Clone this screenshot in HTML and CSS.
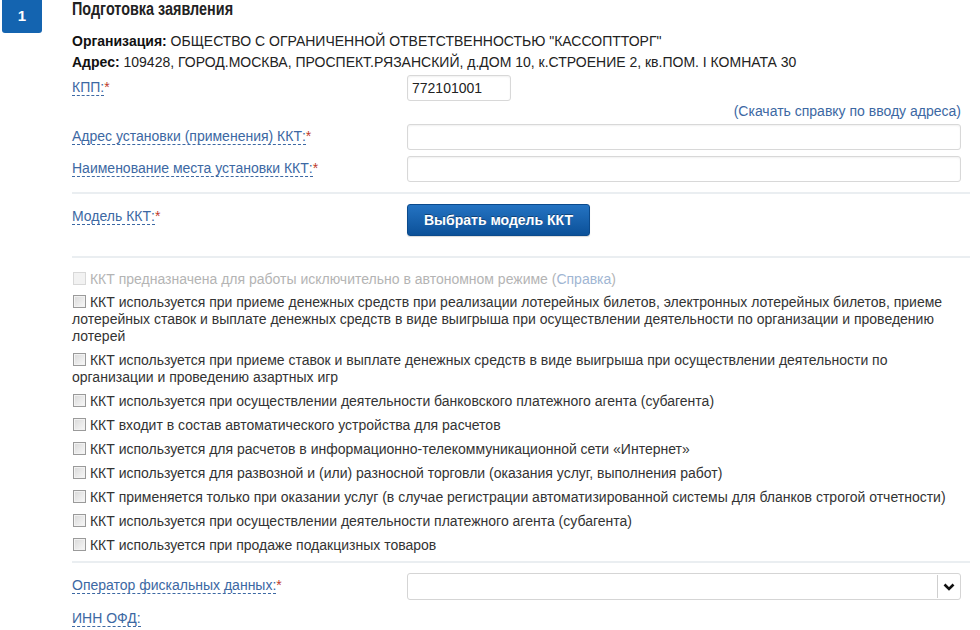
FILE: index.html
```html
<!DOCTYPE html>
<html lang="ru">
<head>
<meta charset="utf-8">
<title>Подготовка заявления</title>
<link rel="stylesheet" href="styles.css">
</head>
<body>
<div class="step">
  <div class="badge">1</div>
  <div class="content">
    <h2 class="title"><span class="title-text">Подготовка заявления</span></h2>
    <div class="info">
      <div><b>Организация:</b> ОБЩЕСТВО С ОГРАНИЧЕННОЙ ОТВЕТСТВЕННОСТЬЮ "КАССОПТТОРГ"</div>
      <div><b>Адрес:</b> 109428, ГОРОД.МОСКВА, ПРОСПЕКТ.РЯЗАНСКИЙ, д.ДОМ 10, к.СТРОЕНИЕ 2, кв.ПОМ. I КОМНАТА 30</div>
    </div>

    <div class="row row-kpp">
      <div class="label"><span class="lbl">КПП:</span><span class="req">*</span></div>
      <div class="field"><div class="input input-short">772101001</div></div>
    </div>
    <div class="help-link"><a>(Скачать справку по вводу адреса)</a></div>
    <div class="row">
      <div class="label"><span class="lbl">Адрес установки (применения) ККТ:</span><span class="req">*</span></div>
      <div class="field"><div class="input"></div></div>
    </div>
    <div class="row">
      <div class="label"><span class="lbl">Наименование места установки ККТ:</span><span class="req">*</span></div>
      <div class="field"><div class="input"></div></div>
    </div>

    <hr class="sep">

    <div class="row row-model">
      <div class="label"><span class="lbl">Модель ККТ:</span><span class="req">*</span></div>
      <div class="field"><button class="btn">Выбрать модель ККТ</button></div>
    </div>

    <hr class="sep sep-model">

    <div class="checks">
      <p class="check disabled"><span class="box"></span> ККТ предназначена для работы исключительно в автономном режиме (<a>Справка</a>)</p>
      <p class="check"><span class="box"></span> ККТ используется при приеме денежных средств при реализации лотерейных билетов, электронных лотерейных билетов, приеме лотерейных ставок и выплате денежных средств в виде выигрыша при осуществлении деятельности по организации и проведению лотерей</p>
      <p class="check"><span class="box"></span> ККТ используется при приеме ставок и выплате денежных средств в виде выигрыша при осуществлении деятельности по организации и проведению азартных игр</p>
      <p class="check"><span class="box"></span> ККТ используется при осуществлении деятельности банковского платежного агента (субагента)</p>
      <p class="check"><span class="box"></span> ККТ входит в состав автоматического устройства для расчетов</p>
      <p class="check"><span class="box"></span> ККТ используется для расчетов в информационно-телекоммуникационной сети «Интернет»</p>
      <p class="check"><span class="box"></span> ККТ используется для развозной и (или) разносной торговли (оказания услуг, выполнения работ)</p>
      <p class="check"><span class="box"></span> ККТ применяется только при оказании услуг (в случае регистрации автоматизированной системы для бланков строгой отчетности)</p>
      <p class="check"><span class="box"></span> ККТ используется при осуществлении деятельности платежного агента (субагента)</p>
      <p class="check"><span class="box"></span> ККТ используется при продаже подакцизных товаров</p>
    </div>

    <hr class="sep sep-ofd">

    <div class="row">
      <div class="label"><span class="lbl">Оператор фискальных данных:</span><span class="req">*</span></div>
      <div class="field">
        <div class="select">
          <span class="select-arrow"><svg width="12" height="8" viewBox="0 0 12 8"><polyline points="1.5,1.5 6,6 10.5,1.5" fill="none" stroke="#111" stroke-width="2.6"/></svg></span>
        </div>
      </div>
    </div>
    <div class="row">
      <div class="label"><span class="lbl">ИНН ОФД:</span></div>
    </div>
  </div>
</div>
</body>
</html>
```

FILE: styles.css
```css
html, body {
  margin: 0;
  padding: 0;
  background: #fff;
}
body {
  font-family: "Liberation Sans", Arial, sans-serif;
  font-size: 14px;
  color: #333;
  overflow: hidden;
}
.step {
  display: flex;
  align-items: flex-start;
}
.badge {
  margin-left: 2px;
  width: 40px;
  height: 33px;
  background: #1464b0;
  color: #fff;
  font-weight: bold;
  font-size: 15px;
  line-height: 31px;
  text-align: center;
  border-radius: 0 0 3px 3px;
}
.content {
  margin-left: 30px;
  width: 898px;
}
.title {
  margin: 0;
  font-family: "Liberation Sans", Arial, sans-serif;
  font-size: 18px;
  line-height: 16px;
  font-weight: bold;
  color: #222;
  white-space: nowrap;
}
.title-text {
  display: inline-block;
  padding-top: 1px;
  transform: scaleX(0.8);
  transform-origin: 0 0;
}
.info {
  margin-top: 14px;
  font-size: 14px;
  line-height: 21px;
  color: #222;
}
.info b {
  color: #111;
}
.row {
  display: flex;
  align-items: flex-start;
  margin-bottom: 6px;
}
.row-kpp {
  margin-top: 2px;
  margin-bottom: 0;
}
.label {
  width: 335px;
  flex: none;
  padding-top: 4px;
  line-height: 17px;
}
.lbl {
  color: #3c68a3;
  border-bottom: 1px dashed #3c68a3;
}
.req {
  color: #c0392b;
}
.field {
  flex: 1;
  margin-right: 9px;
}
.input {
  height: 24px;
  border: 1px solid #d8d8d8;
  border-radius: 3px;
  box-shadow: inset 0 1px 2px rgba(0,0,0,0.06);
  background: #fff;
  font-size: 14px;
  line-height: 24px;
  padding: 0 4px;
  color: #222;
}
.input-short {
  width: 94px;
}
.help-link {
  text-align: right;
  margin-right: 9px;
  font-size: 14px;
  line-height: 17px;
  margin-top: 2px;
  margin-bottom: 4px;
}
a {
  color: #3c68a3;
}
.sep {
  border: 0;
  height: 2px;
  background: #eaeef1;
  margin: 10px 0 10px 0;
}
.row-model {
  margin-bottom: 0;
}
.btn {
  width: 183px;
  height: 32px;
  border: 1px solid #0b4a8c;
  border-radius: 3px;
  background: linear-gradient(#2473c2, #0c5199);
  color: #fff;
  font-family: "Liberation Sans", Arial, sans-serif;
  font-weight: bold;
  font-size: 14px;
  text-shadow: 0 -1px 0 rgba(0,0,0,0.35);
  box-shadow: 0 1px 1px rgba(0,0,0,0.15);
  padding: 0;
}
.sep-model {
  margin: 20px 0 13px 0;
}
.checks {
  line-height: 17px;
}
.check {
  margin: 0 0 7px 0;
}
.check.disabled {
  margin-bottom: 6px;
}
.box {
  display: inline-block;
  width: 11px;
  height: 11px;
  border: 1px solid #9a9a9a;
  background: linear-gradient(135deg, #d9d9d9, #f8f8f8);
  box-shadow: inset 0 0 0 1px #f2f2f2;
  vertical-align: -1px;
  margin-left: 1px;
}
.check.disabled {
  color: #b4b4b4;
}
.check.disabled .box {
  border-color: #d8d8d8;
  background: #f2f2f2;
}
.check.disabled a {
  color: #9fb6d3;
}
.sep-ofd {
  margin: 4px 0 10px 0;
}
.select {
  position: relative;
  height: 25px;
  border: 1px solid #d5d5d5;
  border-radius: 3px;
  background: #fff;
}
.select-arrow {
  position: absolute;
  right: 0;
  top: 1px;
  bottom: 1px;
  width: 22px;
  border-left: 1px solid #cfcfcf;
  display: flex;
  align-items: center;
  justify-content: center;
}
```
